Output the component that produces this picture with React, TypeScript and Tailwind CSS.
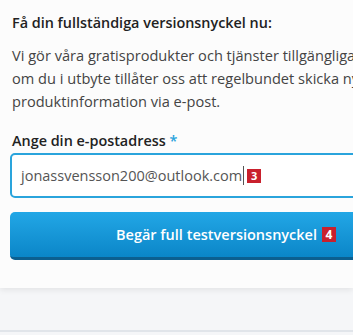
export default function App() {
  return (
    <div className="h-[335px] w-[353px] overflow-hidden bg-[#f5f6f8] font-['Open_Sans',sans-serif]">
      <div className="bg-[#fcfcfc] pb-[28px] pl-[12px] pt-[12px] shadow-[0_2px_6px_rgba(0,0,0,0.08)]">
        <h3 className="whitespace-nowrap text-[14.4px] font-semibold leading-[22px] text-[#222]">
          Få din fullständiga versionsnyckel nu:
        </h3>
        <p className="mt-[10px] whitespace-nowrap text-[14.6px] leading-[23px] text-[#444]">
          Vi gör våra gratisprodukter och tjänster tillgängliga
          <br />
          om du i utbyte tillåter oss att regelbundet skicka ny
          <br />
          produktinformation via e-post.
        </p>
        <label className="mt-[18px] block whitespace-nowrap text-[14.4px] font-semibold leading-[20px] text-[#222]">
          Ange din e-postadress <span className="text-[#29a3dc]">*</span>
        </label>
        <div className="ml-[-2px] mt-[2px] flex h-[45px] w-[420px] items-center rounded-[5px] border-2 border-[#2aa4dc] bg-white pl-[9px]">
          <span className="whitespace-nowrap text-[14.5px] text-[#555]">jonassvensson200@outlook.com</span>
          <span className="ml-[1px] h-[19px] w-px bg-[#555]" />
          <span className="ml-[3px] flex h-[14px] w-[14px] items-center justify-center bg-[#c9202d] text-[11px] font-bold leading-none text-white">
            3
          </span>
        </div>
        <button
          type="button"
          className="ml-[-2px] mt-[14px] flex h-[48px] w-[432px] items-center justify-center rounded-[5px] border-b-[3px] border-[#0b5f90] bg-gradient-to-b from-[#22a7e6] to-[#0a86c8] text-white"
        >
          <span className="whitespace-nowrap text-[14.5px] font-semibold">Begär full testversionsnyckel</span>
          <span className="ml-[5px] flex h-[15px] w-[14px] items-center justify-center bg-[#c9202d] text-[12px] font-bold leading-none text-white">
            4
          </span>
        </button>
      </div>
      <div className="mt-[42px] h-[2px] bg-[#e1e5ea]" />
    </div>
  );
}
